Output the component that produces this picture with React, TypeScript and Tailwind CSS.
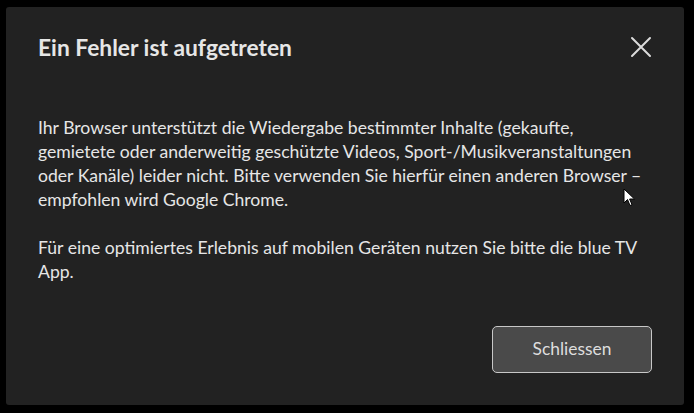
import React from 'react';

const Cursor = () => (
  <svg width="14" height="20" viewBox="0 0 14 20" className="absolute left-[623px] top-[188px]">
    <path d="M1 1 L1 15 L4.5 11.5 L7 17.5 L9 16.7 L6.6 11 L11.5 11 Z" fill="#fff" stroke="#000" strokeWidth="1" strokeLinejoin="round" />
  </svg>
);

const App: React.FC = () => {
  return (
    <div className="relative w-[694px] h-[413px] bg-black pt-[7px] pl-[6px]" style={{ fontFamily: 'Lato, "Open Sans", sans-serif' }}>
      <div className="w-[678px] h-[398px] bg-[#222222] rounded-[3px] flex flex-col pl-[32px] pr-[32px]">
        {/* Header */}
        <div className="flex items-center justify-between pt-[24px]">
          <h2 className="text-[22.8px] leading-[32px] font-bold text-[#e6e6e6]">Ein Fehler ist aufgetreten</h2>
          <button className="text-[#dcdcdc]">
            <svg width="22" height="22" viewBox="0 0 22 22">
              <path d="M2 2 L20 20 M20 2 L2 20" stroke="currentColor" strokeWidth="2" strokeLinecap="round" />
            </svg>
          </button>
        </div>

        {/* Body */}
        <div className="mt-[53px] text-[17.6px] leading-[24px] text-[#e6e6e6] space-y-[24px]">
          <p>
            Ihr Browser unterstützt die Wiedergabe bestimmter Inhalte (gekaufte, gemietete oder anderweitig geschützte Videos, Sport-/Musikveranstaltungen oder Kanäle) leider nicht. Bitte verwenden Sie hierfür einen anderen Browser – empfohlen wird Google Chrome.
          </p>
          <p>
            Für eine optimiertes Erlebnis auf mobilen Geräten nutzen Sie bitte die blue TV App.
          </p>
        </div>

        {/* Footer */}
        <div className="flex justify-end mt-auto mb-[32px]">
          <button className="w-[160px] h-[47px] bg-[#4a4a4a] border border-[#c8c8c8] rounded-[5px] text-[17.4px] text-[#dedede]">
            Schliessen
          </button>
        </div>
      </div>
      <Cursor />
    </div>
  );
};

export default App;
